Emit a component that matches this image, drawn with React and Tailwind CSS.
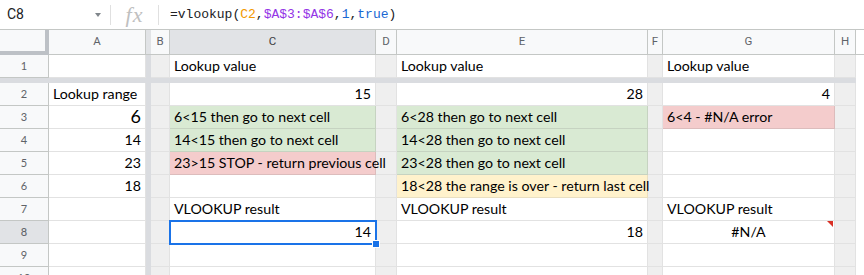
import React from 'react'

const COLS = ['A', 'B', 'C', 'D', 'E', 'F', 'G', 'H']
const GAP = { B: true, D: true, F: true, H: true }

// row data: key by column letter
const ROWS = [
  { n: 2, A: { t: 'Lookup range' }, C: { t: '15', r: true }, E: { t: '28', r: true }, G: { t: '4', r: true } },
  { n: 3, A: { t: '6', r: true, big: true }, C: { t: '6<15 then go to next cell', bg: 'green' }, E: { t: '6<28 then go to next cell', bg: 'green' }, G: { t: '6<4 - #N/A error', bg: 'red' } },
  { n: 4, A: { t: '14', r: true }, C: { t: '14<15 then go to next cell', bg: 'green' }, E: { t: '14<28 then go to next cell', bg: 'green' } },
  { n: 5, A: { t: '23', r: true }, C: { t: '23>15 STOP - return previous cell', bg: 'red' }, E: { t: '23<28 then go to next cell', bg: 'green' } },
  { n: 6, A: { t: '18', r: true }, E: { t: '18<28 the range is over - return last cell', bg: 'yellow' } },
  { n: 7, C: { t: 'VLOOKUP result' }, E: { t: 'VLOOKUP result' }, G: { t: 'VLOOKUP result' } },
  { n: 8, C: { t: '14', r: true, sel: true }, E: { t: '18', r: true }, G: { t: '#N/A', c: true, err: true } },
  { n: 9 },
  { n: 10 },
]

const BG = {
  green: 'bg-[#d9ead3] border-[#c6d3c1]',
  red: 'bg-[#f4cccc] border-[#dcbcbc]',
  yellow: 'bg-[#fff2cc] border-[#e9dfc1]',
}

function RowHead({ n, active }) {
  return (
    <div className={`h-[23px] flex items-center justify-center border-r border-b border-[#c4c7c5] text-[11px] text-[#5f6368] ${active ? 'bg-[#e1e3e6] font-medium text-[#3c4043]' : 'bg-[#f8f9fa]'}`}>
      {n}
    </div>
  )
}

function Cell({ col, d }) {
  if (GAP[col]) {
    return <div className="h-[23px] bg-[#efefef] border-r border-b border-[#e2e2e2]" />
  }
  const tone = d && d.bg ? BG[d.bg] : 'bg-white border-[#e2e2e2]'
  const align = d && d.r ? 'justify-end' : d && d.c ? 'justify-center' : 'justify-start'
  return (
    <div className={`relative h-[23px] flex items-end pb-[2px] px-[4px] border-r border-b whitespace-nowrap ${tone} ${align} ${d && d.sel ? 'z-10' : ''}`}>
      {d && (
        <span className={d.big ? 'text-[18px] leading-[20px]' : 'text-[14.2px] leading-[18px]'}>{d.t}</span>
      )}
      {d && d.sel && (
        <div className="absolute -left-[1px] -top-[1px] w-[208px] h-[25px] border-2 border-[#1a73e8]">
          <div className="absolute -right-[5px] -bottom-[5px] w-[8px] h-[8px] bg-[#1a73e8] border border-white" />
        </div>
      )}
      {d && d.err && (
        <div className="absolute right-[1px] top-0 w-0 h-0 border-t-[6px] border-t-[#d93025] border-l-[6px] border-l-transparent" />
      )}
    </div>
  )
}

export default function App() {
  return (
    <div className="w-[864px] h-[275px] overflow-hidden bg-white text-[#000] font-['Lato','Open_Sans',sans-serif]">

      {/* Formula bar */}
      <div className="h-[30px] flex items-center border-b border-[#c4c7c5] font-['Roboto',sans-serif]">
        <div className="w-[110px] flex items-center justify-between pl-[7px] pr-[9px]">
          <span className="text-[14px] text-[#202124]">C8</span>
          <span className="w-0 h-0 border-l-[3.5px] border-r-[3.5px] border-t-[4px] border-l-transparent border-r-transparent border-t-[#80868b]" />
        </div>
        <div className="w-px h-[20px] bg-[#e0e0e0]" />
        <div className="w-[47px] flex justify-center">
          <span className="italic text-[22px] leading-none text-[#c0c0c0] font-['Liberation_Serif',serif] tracking-[1px]">fx</span>
        </div>
        <div className="w-px h-[20px] bg-[#e0e0e0]" />
        <div className="pl-[11px] text-[13px] font-['Liberation_Mono',monospace] text-[#202124] pt-[1px]">
          =vlookup(<span className="text-[#f29900]">C2</span>,<span className="text-[#9334e6]">$A$3:$A$6</span>,<span className="text-[#1967d2]">1</span>,<span className="text-[#1967d2]">true</span>)
        </div>
      </div>

      {/* Grid */}
      <div className="grid grid-cols-[49px_97px_5px_19px_206px_21px_251px_15px_172px_21px_1fr]">

        {/* Column headers */}
        <div className="h-[25px] bg-[#f8f9fa] border-r-[4px] border-b-[4px] border-[#bdc1c6]" />
        {COLS.slice(0, 1).map(c => (
          <div key={c} className="h-[25px] flex items-center justify-center bg-[#f8f9fa] border-r border-b border-[#c4c7c5] text-[11.5px] text-[#5f6368] font-['Roboto',sans-serif]">{c}</div>
        ))}
        <div className="h-[25px] bg-[#e1e3e6] border-b border-[#c4c7c5]" />
        {COLS.slice(1).map(c => (
          <div key={c} className={`h-[25px] flex items-center justify-center border-r border-b border-[#c4c7c5] text-[11.5px] font-['Roboto',sans-serif] ${c === 'C' ? 'bg-[#e1e3e6] text-[#3c4043]' : 'bg-[#f8f9fa] text-[#5f6368]'}`}>{c}</div>
        ))}
        <div className="h-[25px] border-b border-[#c4c7c5]" />

        {/* Row 1 (frozen) */}
        <RowHead n={1} />
        <Cell col="A" />
        <div className="h-[23px] bg-[#dadce0]" />
        {COLS.slice(1).map(c => (
          <Cell key={c} col={c} d={c === 'C' || c === 'E' || c === 'G' ? { t: 'Lookup value' } : null} />
        ))}
        <div />

        {/* Frozen row divider */}
        <div className="col-span-10 h-[5px] bg-[#dadce0]" />
        <div />

        {ROWS.map(row => (
          <React.Fragment key={row.n}>
            <RowHead n={row.n} active={row.n === 8} />
            <Cell col="A" d={row.A} />
            <div className="h-[23px] bg-[#dadce0]" />
            {COLS.slice(1).map(c => (
              <Cell key={c} col={c} d={row[c]} />
            ))}
            <div />
          </React.Fragment>
        ))}
      </div>
    </div>
  )
}
